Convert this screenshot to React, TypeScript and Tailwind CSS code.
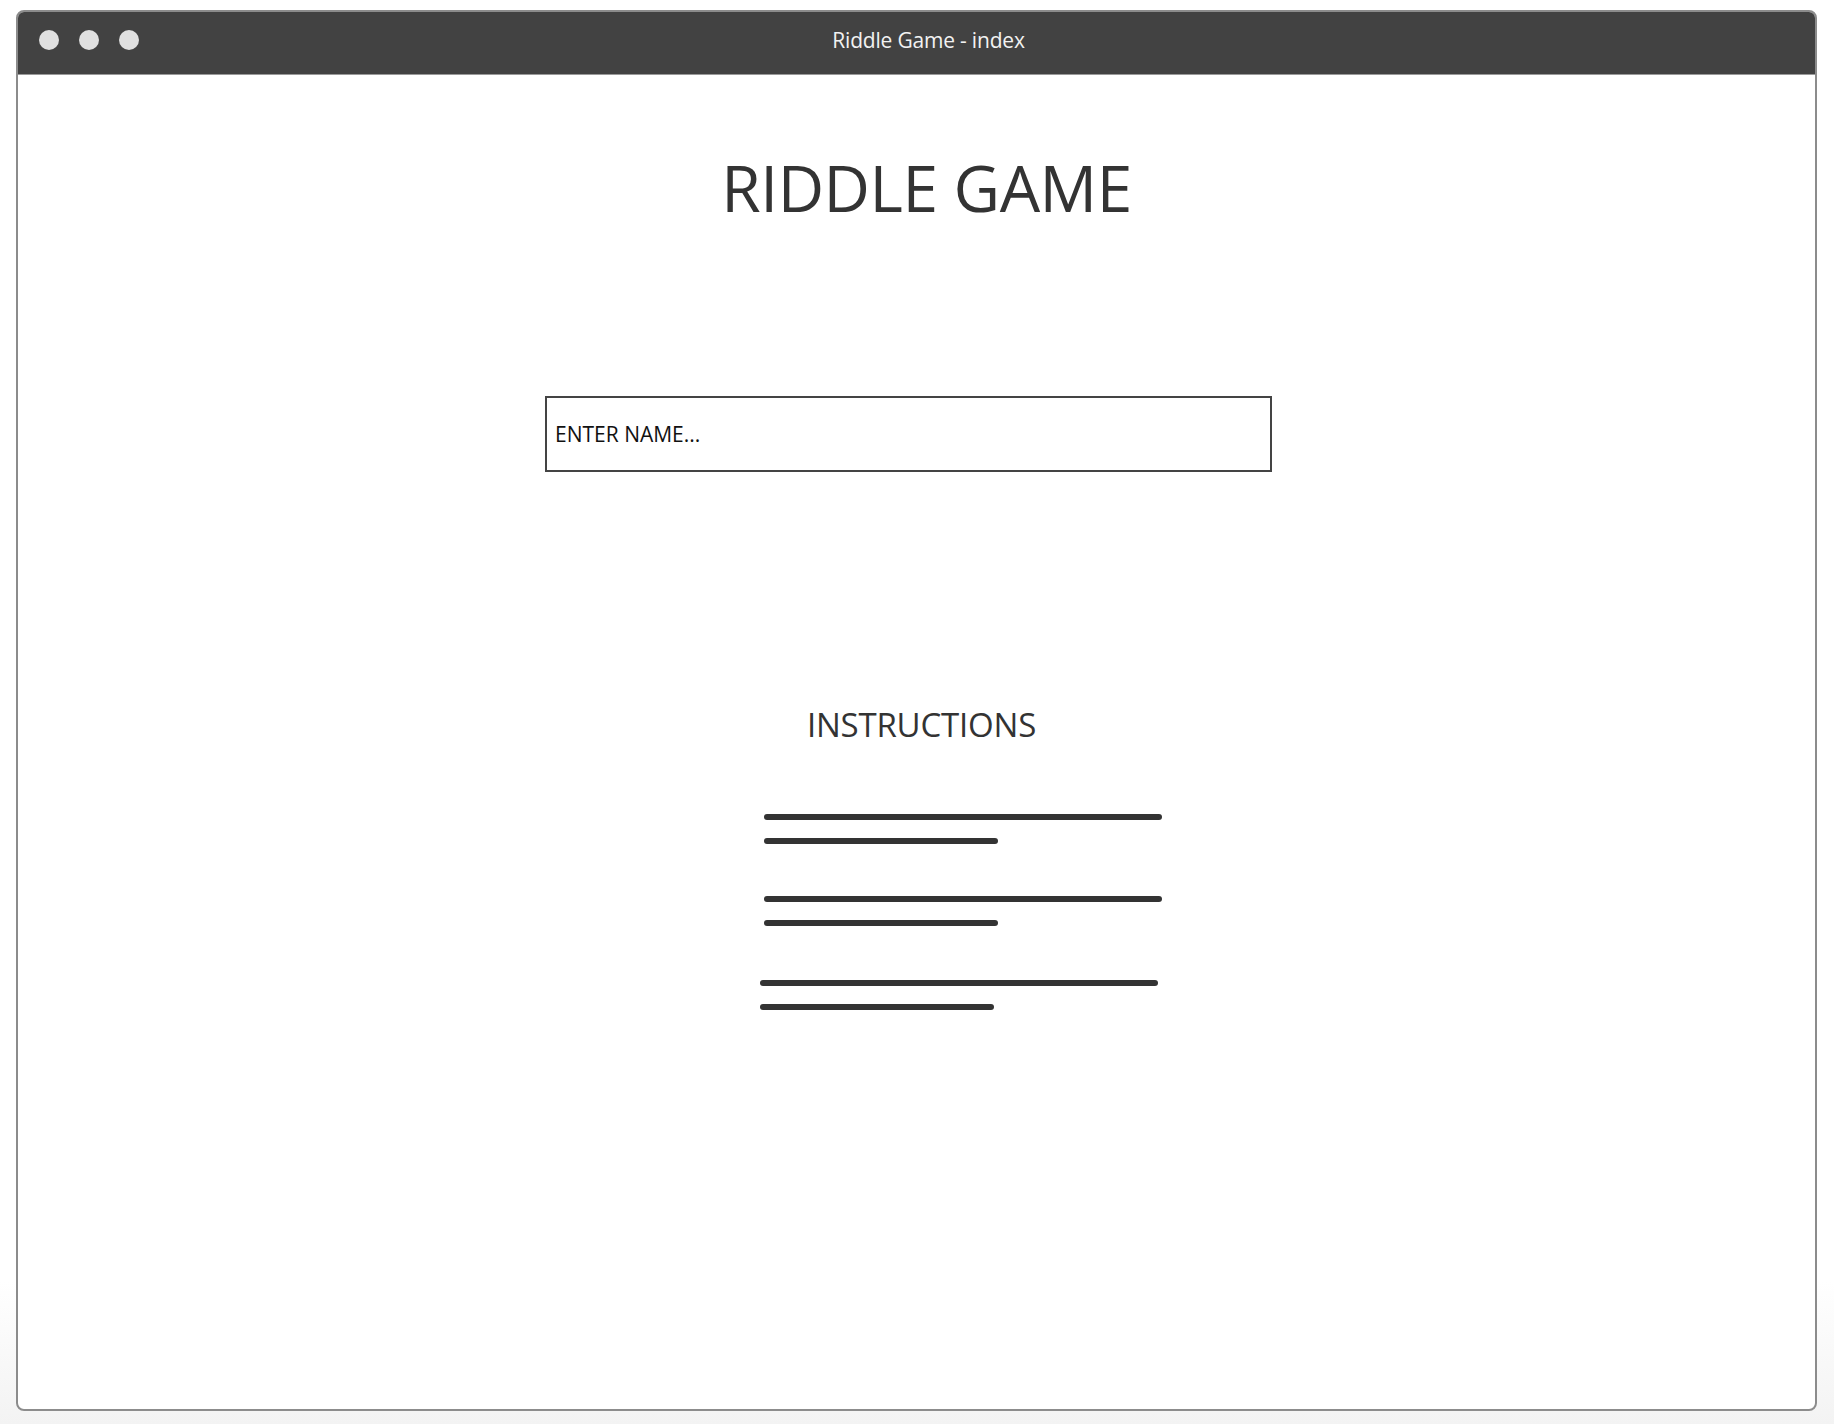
export default function App() {
  const font = { fontFamily: '"Open Sans", "Noto Sans", sans-serif' };
  return (
    <div className="w-[1834px] h-[1424px] bg-gradient-to-b from-white from-[90%] to-[#f3f3f3] pt-[10px] pl-[16px]" style={font}>
      <div className="w-[1801px] h-[1401px] rounded-[8px] border-2 border-[#8c8c8c] bg-white overflow-hidden flex flex-col">
        <div className="h-[63px] pb-[6px] bg-[#424242] border-b border-[#9a9a9a] grid grid-cols-[1fr_auto_1fr] items-center shrink-0">
          <div className="flex items-center gap-[20px] pl-[21px]">
            <div className="w-[20px] h-[20px] rounded-full bg-[#e0e0e0]" />
            <div className="w-[20px] h-[20px] rounded-full bg-[#e0e0e0]" />
            <div className="w-[20px] h-[20px] rounded-full bg-[#e0e0e0]" />
          </div>
          <div className="pl-[24px] text-[21px] leading-none text-[#f2f2f2] tracking-[-0.2px]">Riddle Game - index</div>
          <div />
        </div>
        <div className="flex-1">
          <h1 className="mt-[81px] text-center pl-[20px] text-[64px] leading-none text-[#333333] font-normal tracking-[-0.5px]">RIDDLE GAME</h1>
          <div className="mt-[176px] ml-[527px] w-[727px] h-[76px] border-2 border-[#444444] flex items-center">
            <input
              className="w-full h-full pl-[8px] text-[21px] text-[#111111] outline-none bg-transparent placeholder:text-[#111111]"
              placeholder="ENTER NAME..."
              style={font}
            />
          </div>
          <div className="mt-[236px] text-center pl-[10px] text-[33px] leading-none text-[#333333] tracking-[-0.2px]">INSTRUCTIONS</div>
          <div className="mt-[73px] ml-[746px] flex flex-col">
            <div className="w-[398px] h-[6px] rounded-full bg-[#333333]" />
            <div className="mt-[18px] w-[234px] h-[6px] rounded-full bg-[#333333]" />
            <div className="mt-[52px] w-[398px] h-[6px] rounded-full bg-[#333333]" />
            <div className="mt-[18px] w-[234px] h-[6px] rounded-full bg-[#333333]" />
            <div className="mt-[54px] -ml-[4px] w-[398px] h-[6px] rounded-full bg-[#333333]" />
            <div className="mt-[18px] -ml-[4px] w-[234px] h-[6px] rounded-full bg-[#333333]" />
          </div>
        </div>
      </div>
    </div>
  );
}
